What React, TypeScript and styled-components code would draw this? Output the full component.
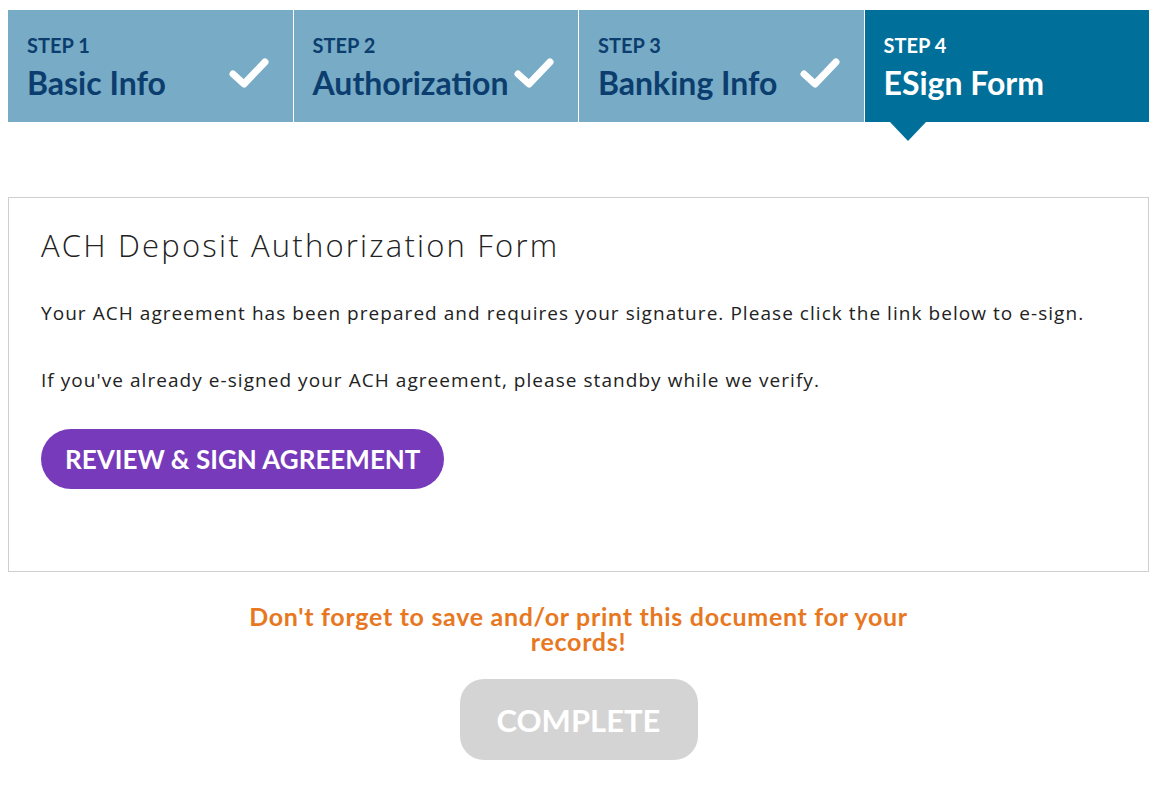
import styled, { createGlobalStyle, css } from 'styled-components';

const GlobalStyle = createGlobalStyle`
  body {
    margin: 0;
    background: #fff;
    font-family: Lato, 'Open Sans', sans-serif;
  }
`;

type Step = {
  label: string;
  title: string;
  done: boolean;
};

const STEPS: Step[] = [
  { label: 'STEP 1', title: 'Basic Info', done: true },
  { label: 'STEP 2', title: 'Authorization', done: true },
  { label: 'STEP 3', title: 'Banking Info', done: true },
  { label: 'STEP 4', title: 'ESign Form', done: false },
];

const Page = styled.div`
  padding: 10px 15px 0 8px;
`;

const StepBar = styled.div`
  display: grid;
  grid-template-columns: repeat(4, 1fr);
  gap: 1px;
  background: #fff;
`;

type Active = { $active: boolean };

const StepCell = styled.div<Active>`
  position: relative;
  height: 112px;
  padding: 22px 19px 0;
  box-sizing: border-box;
  background: #78abc5;
  color: #0b3d6e;
  ${({ $active }) =>
    $active &&
    css`
      background: #00709a;
      color: #fff;
      &::after {
        content: '';
        position: absolute;
        left: 25px;
        bottom: -19px;
        border-left: 18px solid transparent;
        border-right: 18px solid transparent;
        border-top: 19px solid #00709a;
      }
    `};
`;

const StepLabel = styled.div`
  font-size: 20px;
  font-weight: 700;
  line-height: 26px;
`;

const StepTitle = styled.div`
  margin-top: 3px;
  font-size: 32px;
  font-weight: 700;
  line-height: 44px;
`;

const Check = styled.svg`
  position: absolute;
  right: 24px;
  top: 46px;
  width: 40px;
  height: 33px;
`;

const Card = styled.section`
  margin-top: 75px;
  border: 1px solid #cfcfcf;
  padding: 27px 32px 82px;
`;

const Heading = styled.h1`
  margin: 0;
  font-family: 'Open Sans', sans-serif;
  font-size: 31px;
  font-weight: 300;
  letter-spacing: 2.2px;
  color: #222;
  line-height: 40px;
`;

const Text = styled.p`
  margin: 0;
  font-family: 'Open Sans', sans-serif;
  font-size: 19px;
  letter-spacing: 1.05px;
  line-height: 26px;
  color: #222;
`;

const TextStack = styled.div`
  display: flex;
  flex-direction: column;
  gap: 41px;
  margin-top: 35px;
`;

const PillButton = styled.button`
  margin-top: 36px;
  height: 60px;
  padding: 0 24px;
  border: none;
  border-radius: 30px;
  background: #763abb;
  color: #fff;
  font-family: Lato, sans-serif;
  font-size: 26px;
  font-weight: 700;
  cursor: pointer;
`;

const Footer = styled.div`
  display: flex;
  flex-direction: column;
  align-items: center;
  padding-top: 32px;
`;

const Reminder = styled.p`
  margin: 0;
  max-width: 700px;
  text-align: center;
  color: #e8781f;
  font-size: 25px;
  font-weight: 700;
  letter-spacing: 0.7px;
  line-height: 25px;
`;

const CompleteButton = styled.button`
  margin-top: 25px;
  width: 238px;
  height: 81px;
  border: none;
  border-radius: 24px;
  background: #d4d4d4;
  color: #fff;
  font-family: Lato, sans-serif;
  font-size: 31px;
  font-weight: 700;
`;

const CheckIcon = () => (
  <Check viewBox="0 0 40 33">
    <path d="M4 18 L15 28 L36 6" fill="none" stroke="#fff" strokeWidth="7" strokeLinecap="round" strokeLinejoin="round" />
  </Check>
);

export default function App() {
  return (
    <>
      <GlobalStyle />
      <Page>
        <StepBar>
          {STEPS.map((step) => (
            <StepCell key={step.label} $active={!step.done}>
              <StepLabel>{step.label}</StepLabel>
              <StepTitle>{step.title}</StepTitle>
              {step.done && <CheckIcon />}
            </StepCell>
          ))}
        </StepBar>
        <Card>
          <Heading>ACH Deposit Authorization Form</Heading>
          <TextStack>
            <Text>
              Your ACH agreement has been prepared and requires your signature. Please click the link below to e-sign.
            </Text>
            <Text>If you've already e-signed your ACH agreement, please standby while we verify.</Text>
          </TextStack>
          <PillButton>REVIEW &amp; SIGN AGREEMENT</PillButton>
        </Card>
        <Footer>
          <Reminder>Don't forget to save and/or print this document for your records!</Reminder>
          <CompleteButton disabled>COMPLETE</CompleteButton>
        </Footer>
      </Page>
    </>
  );
}
